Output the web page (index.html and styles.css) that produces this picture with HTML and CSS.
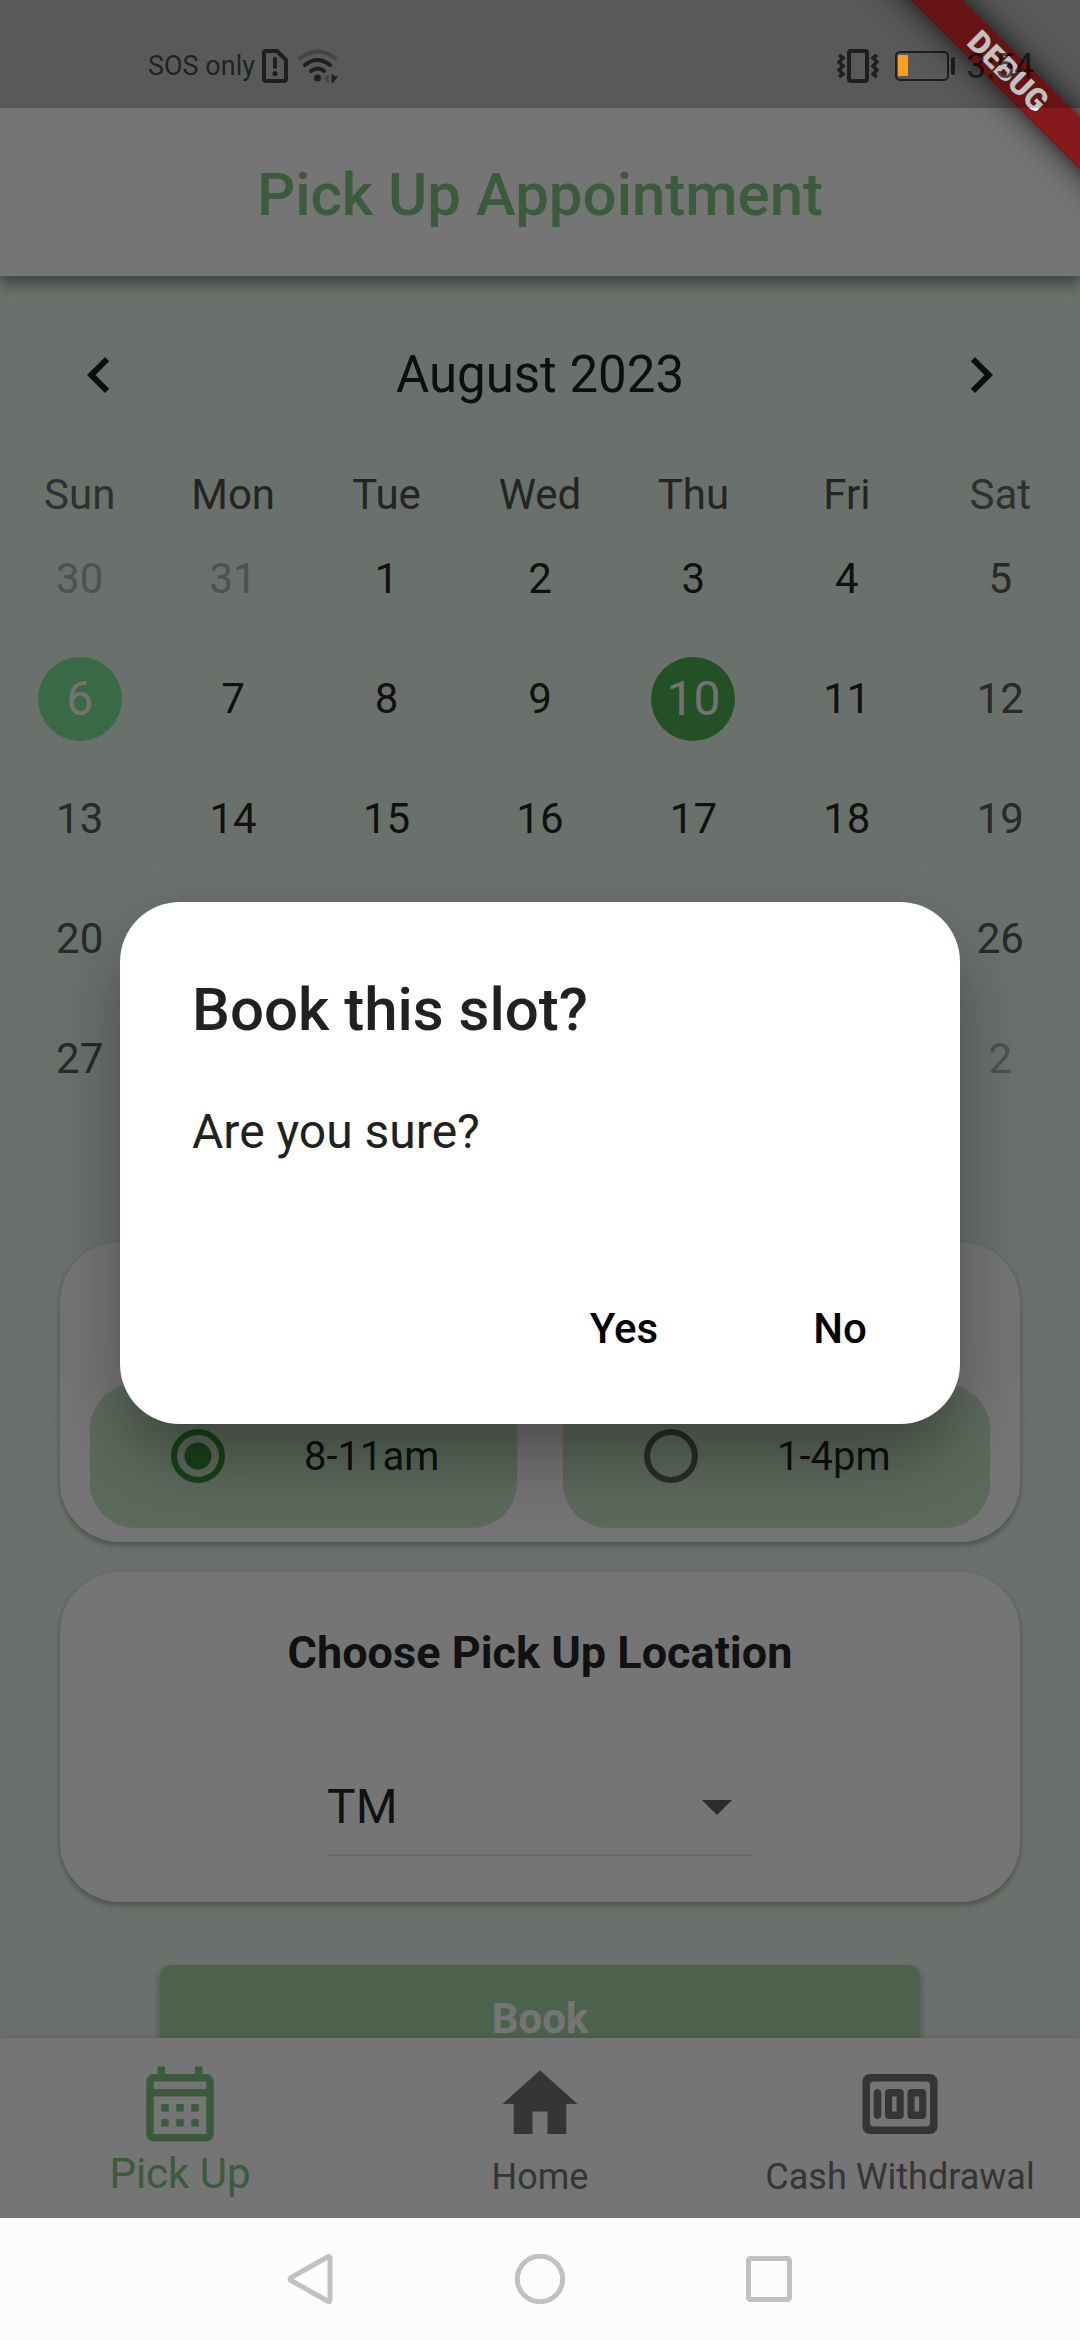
FILE: index.html
```html
<!DOCTYPE html>
<html lang="en">
<head>
<meta charset="utf-8">
<meta name="viewport" content="width=device-width, initial-scale=1">
<title>Pick Up Appointment</title>
<link rel="stylesheet" href="styles.css">
</head>
<body>
<div class="phone">
  <div class="app">
    <div class="status-space"></div>
    <header class="app-bar"><h1>Pick Up Appointment</h1></header>
    <main class="content">
      <section class="calendar">
        <div class="cal-header">
          <button class="icon-btn" type="button" aria-label="Previous month"><svg viewBox="0 0 24 24"><path d="M15.41 7.41 14 6l-6 6 6 6 1.41-1.41L10.83 12z"/></svg></button>
          <h2>August 2023</h2>
          <button class="icon-btn" type="button" aria-label="Next month"><svg viewBox="0 0 24 24"><path d="M10 6 8.59 7.41 13.17 12l-4.58 4.59L10 18l6-6z"/></svg></button>
        </div>
        <table class="days">
          <thead><tr><th>Sun</th><th>Mon</th><th>Tue</th><th>Wed</th><th>Thu</th><th>Fri</th><th>Sat</th></tr></thead>
          <tbody>
            <tr><td class="out">30</td><td class="out">31</td><td>1</td><td>2</td><td>3</td><td>4</td><td>5</td></tr>
            <tr><td><span class="mark today">6</span></td><td>7</td><td>8</td><td>9</td><td><span class="mark picked">10</span></td><td>11</td><td>12</td></tr>
            <tr><td>13</td><td>14</td><td>15</td><td>16</td><td>17</td><td>18</td><td>19</td></tr>
            <tr><td>20</td><td></td><td></td><td></td><td></td><td></td><td>26</td></tr>
            <tr><td>27</td><td></td><td></td><td></td><td></td><td></td><td class="out">2</td></tr>
          </tbody>
        </table>
      </section>
      <section class="card slots">
        <label class="slot"><input type="radio" name="slot" checked><span>8-11am</span></label>
        <label class="slot"><input type="radio" name="slot"><span>1-4pm</span></label>
      </section>
      <section class="card location">
        <label class="card-title" for="place">Choose Pick Up Location</label>
        <div class="select-wrap">
          <select id="place"><option>TM</option></select>
          <svg viewBox="0 0 24 24"><path d="m7 10 5 5 5-5z"/></svg>
        </div>
      </section>
      <button class="book" type="button">Book</button>
    </main>
    <nav class="tabs">
      <a class="tab active" href="#pickup"><svg viewBox="0 0 24 24"><path d="M19 4h-1V2h-2v2H8V2H6v2H5c-1.11 0-1.99.9-1.99 2L3 20c0 1.1.89 2 2 2h14c1.1 0 2-.9 2-2V6c0-1.1-.9-2-2-2zm0 16H5V10h14v10zm0-12H5V6h14v2zM9 14H7v-2h2v2zm4 0h-2v-2h2v2zm4 0h-2v-2h2v2zm-8 4H7v-2h2v2zm4 0h-2v-2h2v2zm4 0h-2v-2h2v2z"/></svg><span>Pick Up</span></a>
      <a class="tab" href="#home"><svg viewBox="0 0 24 24"><path d="M10 20v-6h4v6h5v-8h3L12 3 2 12h3v8z"/></svg><span>Home</span></a>
      <a class="tab" href="#cash"><svg viewBox="0 0 24 24"><path fill-rule="evenodd" d="M4 4h16c1.1 0 2 .9 2 2v12c0 1.1-.9 2-2 2H4c-1.1 0-2-.9-2-2V6c0-1.1.9-2 2-2zM5 6c-.6 0-1 .4-1 1v10c0 .6.4 1 1 1h14c.6 0 1-.4 1-1V7c0-.6-.4-1-1-1zM6 8c.55 0 1 .45 1 1v6c0 .55-.45 1-1 1s-1-.45-1-1V9c0-.55.45-1 1-1zM9 8h3c.55 0 1 .45 1 1v6c0 .55-.45 1-1 1H9c-.55 0-1-.45-1-1V9c0-.55.45-1 1-1zm.9 2v4h1.2v-4zM15 8h3c.55 0 1 .45 1 1v6c0 .55-.45 1-1 1h-3c-.55 0-1-.45-1-1V9c0-.55.45-1 1-1zm.9 2v4h1.2v-4z"/></svg><span>Cash Withdrawal</span></a>
    </nav>
    <div class="scrim">
      <div class="dialog" role="dialog" aria-labelledby="dlg-title">
        <h2 id="dlg-title">Book this slot?</h2>
        <p>Are you sure?</p>
        <div class="actions"><button type="button">Yes</button><button type="button">No</button></div>
      </div>
    </div>
    <div class="ribbon-clip"><div class="ribbon">DEBUG</div></div>
    <div class="status-bar">
      <span class="carrier">SOS only</span>
      <svg class="sim" viewBox="0 0 26 34"><path d="M4 2h11l9 9v19q0 2-2 2H4q-2 0-2-2V4q0-2 2-2z" fill="none" stroke="currentColor" stroke-width="4"/><path d="M13 10v8" stroke="currentColor" stroke-width="4" stroke-linecap="round"/><circle cx="13" cy="24.5" r="2.6"/></svg>
      <svg class="wifi" viewBox="0 0 40 34"><g fill="none" stroke="currentColor" stroke-width="4" stroke-linecap="round"><path opacity=".35" d="M2 9q18-13 35 0"/><path d="M7 16q12-10 25 0M13 22q7-5 13 0"/></g><circle cx="19.5" cy="29" r="3.5"/><path opacity=".35" d="M31 25v9l-5-4.500z"/><path d="M33.500 25h1.500l1 2h3.500v1l-4.500 6h-1.500z"/></svg>
      <span class="spacer"></span>
      <svg class="vibrate" viewBox="0 0 42 34"><rect x="12" y="2" width="18" height="30" rx="2" fill="none" stroke="currentColor" stroke-width="4"/><path d="M2 6l4 3-4 4 4 4-4 4 4 4-4 3M40 6l-4 3 4 4-4 4 4 4-4 4 4 3" fill="none" stroke="currentColor" stroke-width="3.500"/></svg>
      <svg class="battery" viewBox="0 0 62 30"><rect x="1" y="1" width="52" height="28" rx="4" fill="none" stroke="currentColor" stroke-width="2"/><rect x="3" y="4" width="10" height="21" rx="1" fill="#ff9d1c"/><rect x="56" y="6" width="4" height="18" rx="2"/></svg>
      <span class="clock">3:54</span>
    </div>
  </div>
  <nav class="system-nav">
    <button type="button" aria-label="Back"><svg viewBox="0 0 50 50"><path d="M44 4.500q0-3-2.500-1.500L5 23.500q-2 1.500 0 3L41.500 47q2.500 1.500 2.500-1.500z"/></svg></button>
    <button type="button" aria-label="Home screen"><svg viewBox="0 0 50 50"><circle cx="25" cy="25" r="22.7"/></svg></button>
    <button type="button" aria-label="Recent apps"><svg viewBox="0 0 50 50"><rect x="4.500" y="4.500" width="41" height="41" rx="2"/></svg></button>
  </nav>
</div>
</body>
</html>
```
FILE: styles.css
```css
* { box-sizing: border-box; }
body { margin: 0; font-family: Roboto, "Noto Sans", sans-serif; color: rgba(0, 0, 0, .87); }
h1, h2, p { margin: 0; font-weight: 400; }
button { border: 0; padding: 0; background: none; font: inherit; color: inherit; }
svg { display: block; fill: currentColor; }

.phone { display: flex; flex-direction: column; height: 100vh; }
.app { position: relative; flex: 1; min-height: 0; display: flex; flex-direction: column; overflow: hidden; background: #e8f5e9; }
.status-space { height: 108px; flex: none; background: #fff; }
.app-bar { position: relative; z-index: 1; flex: none; height: 168px; display: flex; align-items: center; justify-content: center; padding-top: 5px; background: #fff; box-shadow: 0 6px 12px rgba(0, 0, 0, .3), 0 12px 15px rgba(0, 0, 0, .14); }
.app-bar h1 { font-size: 60px; font-weight: 500; line-height: 72px; color: #81c784; }

.content { flex: 1; min-height: 0; overflow: hidden; display: flex; flex-direction: column; padding: 3px 60px 0; }
.calendar { margin: 0 -57px 123px; }
.cal-header { display: flex; align-items: center; justify-content: space-between; height: 192px; padding: 0 60px; }
.cal-header h2 { font-size: 51px; line-height: 60px; }
.icon-btn { width: 72px; height: 72px; }
.days { width: 100%; table-layout: fixed; border-collapse: collapse; font-size: 42px; line-height: 48px; text-align: center; }
.days th, .days td { padding: 0; font-weight: 400; }
.days th { height: 48px; color: #4f4f4f; }
.days td { height: 120px; }
.days th:first-child, .days th:last-child { color: #6a6a6a; }
.days td:first-child, .days td:last-child { color: #5a5a5a; }
.days td.out { color: #aeaeae; }
.mark { display: flex; align-items: center; justify-content: center; width: 84px; height: 84px; margin: 0 auto; border-radius: 50%; font-size: 48px; color: #fafafa; }
.today { background: #7de696; }
.picked { background: #4caf50; }

.card { flex: none; border-radius: 60px; background: #fff; box-shadow: 0 3px 6px rgba(0, 0, 0, .3); }
.slots { display: grid; grid-template-columns: 1fr 1fr; gap: 46px; padding: 142px 30px 14px; margin-bottom: 30px; }
.slot { display: flex; align-items: center; gap: 79px; height: 144px; padding-left: 81px; border-radius: 45px; background: #c8e6c9; font-size: 40px; }
.slot input { appearance: none; width: 54px; height: 54px; margin: 0; border: 6px solid #616161; border-radius: 50%; }
.slot input:checked { border-color: #388e3c; background: radial-gradient(circle, #388e3c 13px, transparent 14px); }
.location { display: flex; flex-direction: column; align-items: center; height: 330px; padding-top: 54px; }
.card-title { font-size: 45px; font-weight: 700; line-height: 54px; }
.select-wrap { display: flex; align-items: center; width: 426px; height: 98px; margin-top: 78px; border-bottom: 2px solid #e0e0e0; }
.select-wrap select { appearance: none; flex: 1; border: 0; padding: 0; background: none; font: inherit; font-size: 48px; color: inherit; }
.select-wrap svg { width: 72px; height: 72px; color: #616161; }
.book { flex: none; height: 108px; margin: 63px 100px 0; border-radius: 12px; background: #a5d6a7; color: #fff; font-size: 42px; font-weight: 700; line-height: 36px; box-shadow: 0 4px 8px rgba(0, 0, 0, .3); }

.tabs { position: relative; flex: none; display: grid; grid-template-columns: repeat(3, 1fr); height: 180px; background: #fff; box-shadow: 0 0 6px rgba(0, 0, 0, .15); }
.tab { display: flex; flex-direction: column; align-items: center; padding-top: 21px; color: #757575; font-size: 36px; line-height: 56px; text-decoration: none; }
.tab svg { width: 90px; height: 90px; }
.tab.active { color: #81c784; font-size: 42px; line-height: 50px; }

.scrim { position: absolute; inset: 0; z-index: 2; display: flex; align-items: center; padding: 108px 120px 0; background: rgba(0, 0, 0, .54); }
.dialog { flex: 1; border-radius: 60px; padding: 72px 72px 24px; background: #fff; color: #212121; box-shadow: 0 36px 72px -6px rgba(0, 0, 0, .36); }
.dialog h2 { font-size: 60px; font-weight: 500; line-height: 72px; }
.dialog p { margin-top: 56px; font-size: 48px; line-height: 60px; }
.actions { display: flex; justify-content: flex-end; gap: 72px; margin: 94px -24px 0 0; }
.actions button { width: 144px; height: 144px; font-size: 42px; font-weight: 500; color: #000; }

.ribbon-clip { position: absolute; inset: 0 0 auto auto; z-index: 3; width: 240px; height: 240px; overflow: hidden; }
.ribbon { position: absolute; top: 53px; right: -108px; width: 360px; height: 37px; line-height: 37px; text-align: center; font-size: 31px; font-weight: 900; color: #fff; background: #86191b; box-shadow: 0 0 30px rgba(0, 0, 0, .8); transform: rotate(45deg); }
.status-bar { position: absolute; inset: 0 0 auto; z-index: 4; display: flex; align-items: center; height: 108px; padding: 24px 46px 0 148px; background: rgba(0, 0, 0, .24); color: rgba(0, 0, 0, .65); }
.carrier { font-size: 27px; }
.sim { width: 26px; height: 34px; margin-left: 7px; }
.wifi { width: 40px; height: 34px; margin-left: 10px; }
.spacer { flex: 1; }
.vibrate { width: 42px; height: 34px; margin-right: 16px; }
.battery { width: 62px; height: 30px; margin-right: 10px; }
.clock { font-size: 35px; }

.system-nav { flex: none; display: flex; align-items: center; justify-content: center; gap: 179px; height: 122px; background: #fcfcfc; }
.system-nav svg { width: 50px; height: 50px; fill: none; stroke: #c1c1c1; stroke-width: 5px; }
```
